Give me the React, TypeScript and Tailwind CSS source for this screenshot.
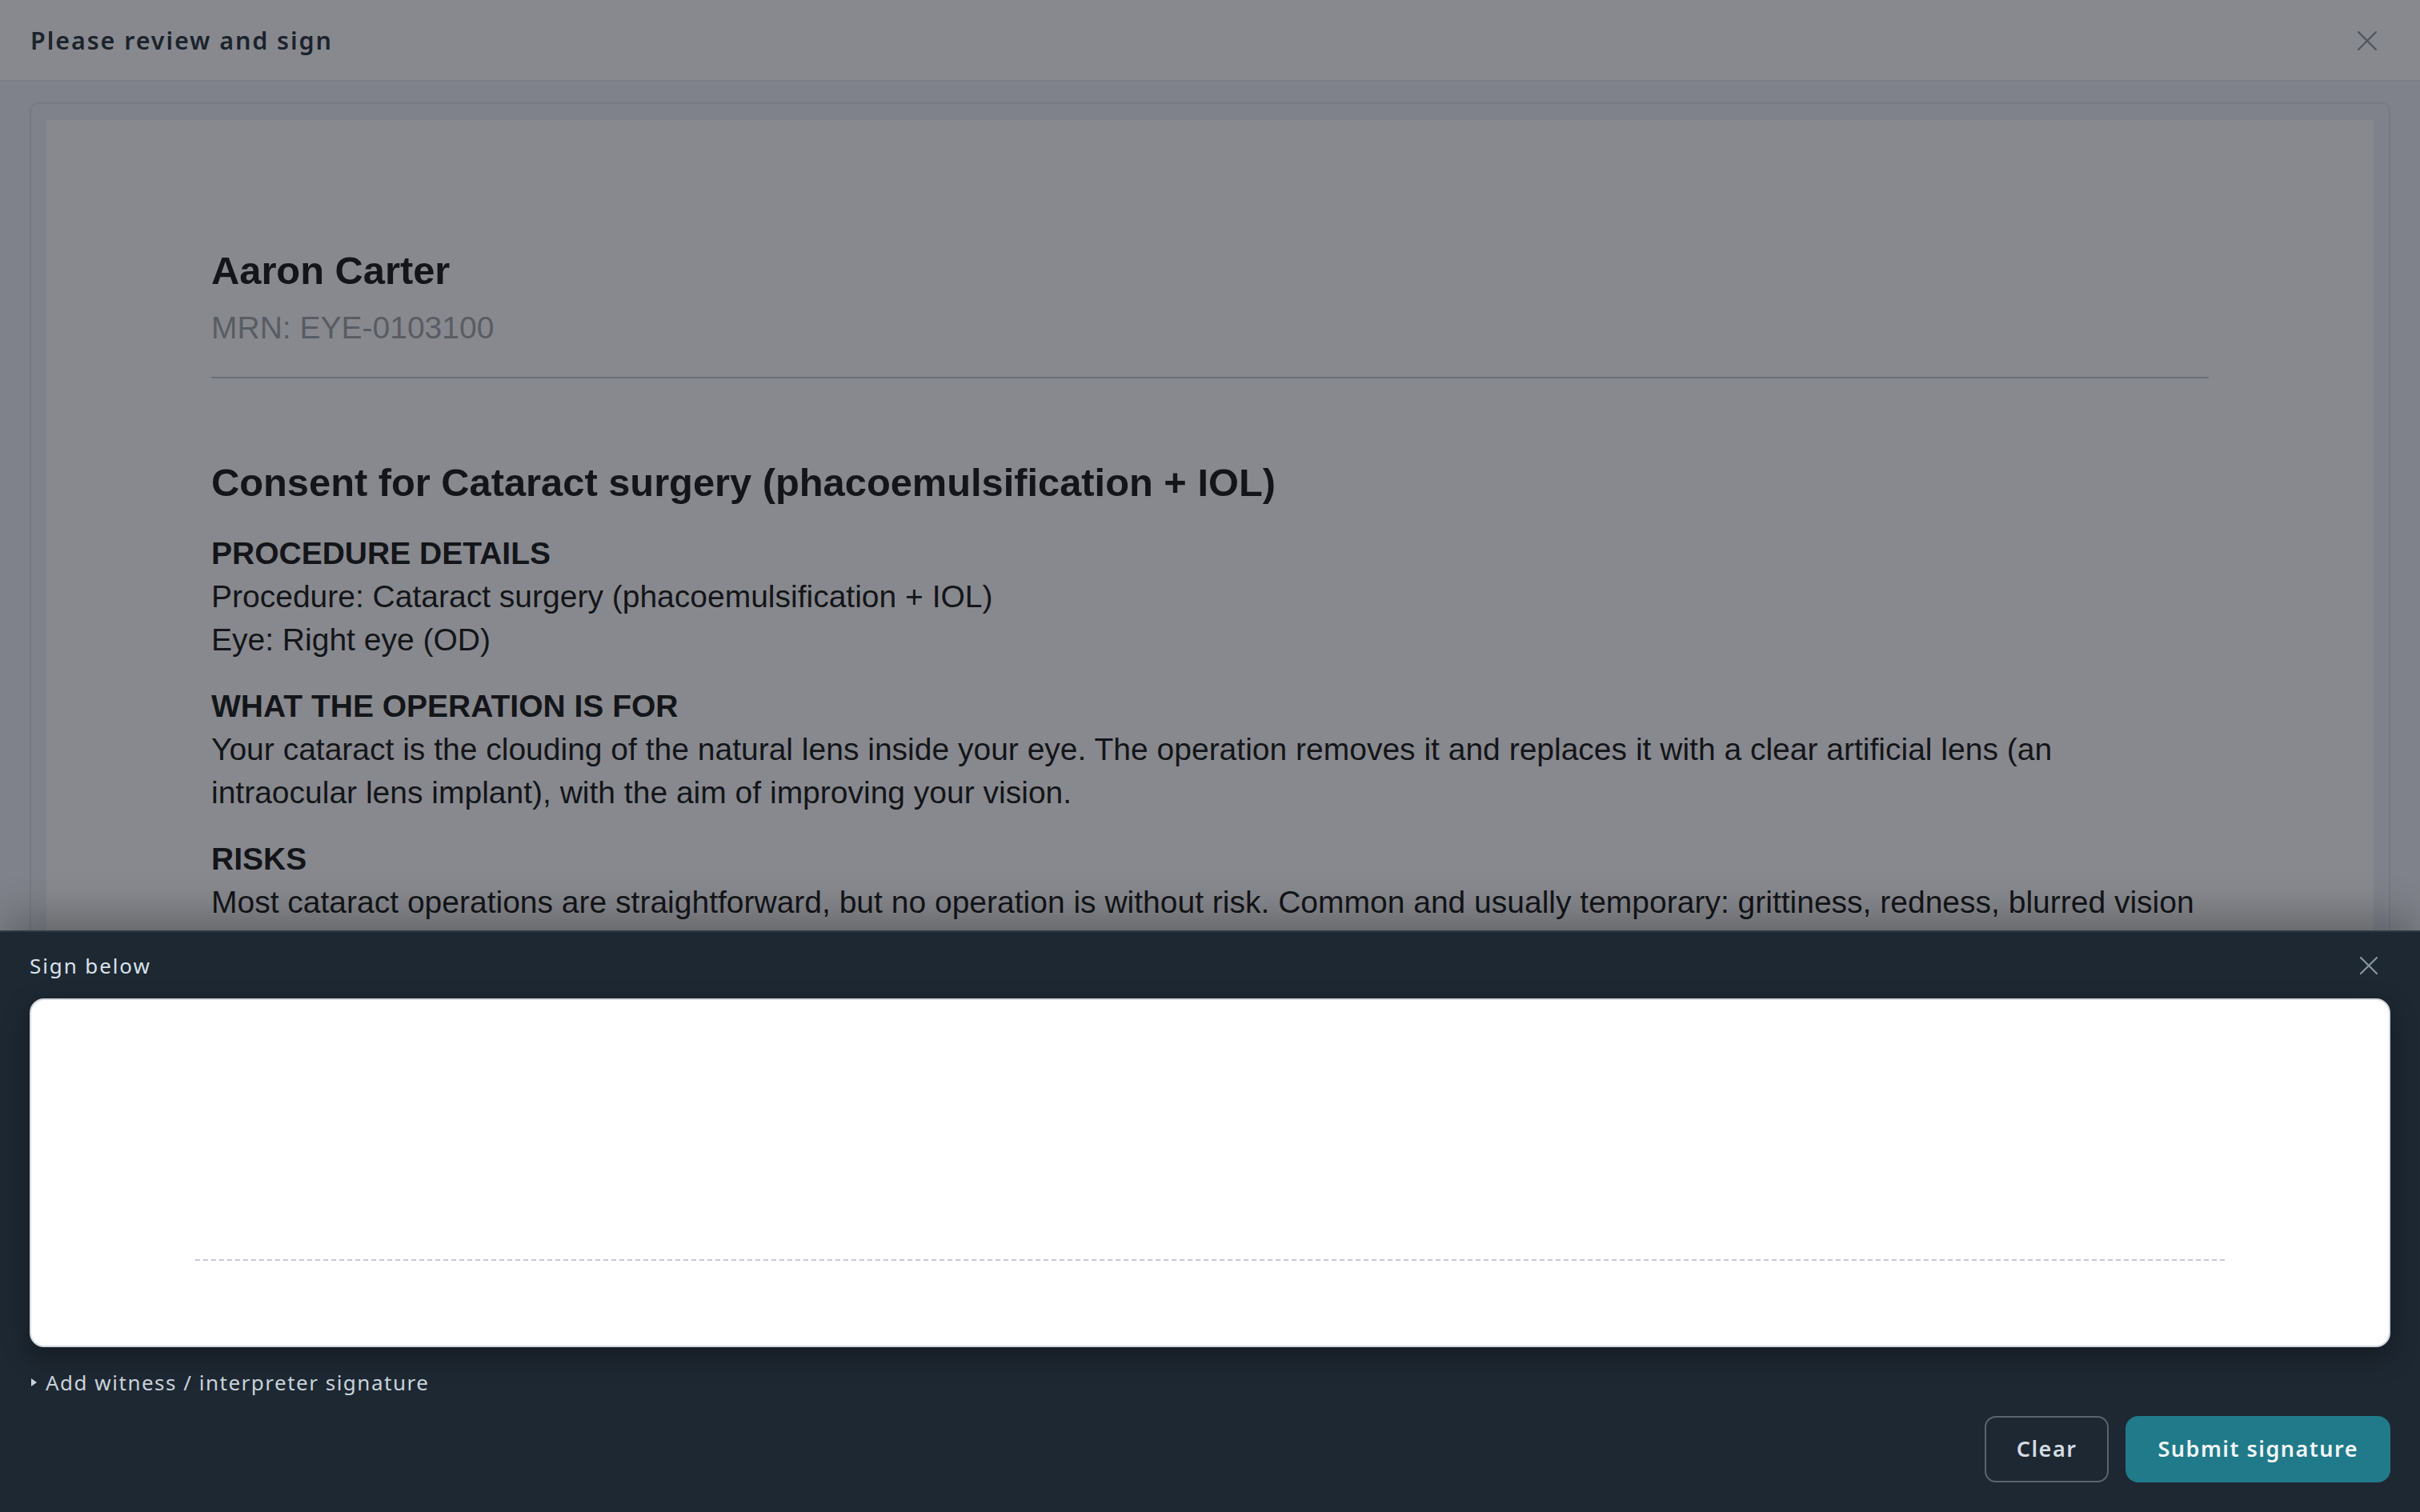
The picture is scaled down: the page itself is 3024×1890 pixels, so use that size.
import React from "react";

function XIcon({ size, color, stroke }: { size: number; color: string; stroke: number }) {
  return (
    <svg width={size} height={size} viewBox="0 0 24 24" fill="none" stroke={color} strokeWidth={stroke} strokeLinecap="round">
      <path d="M1 1L23 23M23 1L1 23" />
    </svg>
  );
}

export default function App() {
  return (
    <div className="relative h-[1890px] w-full overflow-hidden bg-[#7f828a] font-['Noto_Sans',sans-serif]">
      <header className="flex h-[102px] items-center justify-between border-b-2 border-[#7b7e85] bg-[#88898e] pl-[38px] pr-[54px] pt-[2px]">
        <h1 className="text-[30.5px] font-semibold tracking-[1.9px] text-[#1b232c]">Please review and sign</h1>
        <XIcon size={24} color="#4b5660" stroke={2.2} />
      </header>

      <main className="px-[37px] pt-[26px]">
        <div className="rounded-[10px] border-2 border-[#777a82] px-[19px] pt-[20px]">
          <article className="bg-[#88898e] px-[206px] pt-[155px] pb-[300px] font-['Liberation_Sans',Arial,sans-serif] text-[#131519]">
            <h2 className="text-[48.8px] font-bold leading-[67px]">Aaron Carter</h2>
            <p className="mt-[11px] text-[39px] leading-[54px] text-[#595c63]">MRN: EYE-0103100</p>
            <div className="mt-[34px] h-[2px] bg-[#6b7079]" />

            <h3 className="mt-[97px] text-[48.8px] font-bold leading-[67px]">
              Consent for Cataract surgery (phacoemulsification + IOL)
            </h3>

            <section className="mt-[28px] pr-[12px] text-[39px] leading-[54px]">
              <h4 className="font-bold">PROCEDURE DETAILS</h4>
              <p>Procedure: Cataract surgery (phacoemulsification + IOL)</p>
              <p>Eye: Right eye (OD)</p>
            </section>

            <section className="mt-[29px] pr-[12px] text-[39px] leading-[54px]">
              <h4 className="font-bold">WHAT THE OPERATION IS FOR</h4>
              <p>
                Your cataract is the clouding of the natural lens inside your eye. The operation removes it and replaces it with a clear artificial lens (an intraocular lens implant), with the aim of improving your vision.
              </p>
            </section>

            <section className="mt-[29px] pr-[12px] text-[39px] leading-[54px]">
              <h4 className="font-bold">RISKS</h4>
              <p>
                Most cataract operations are straightforward, but no operation is without risk. Common and usually temporary: grittiness, redness, blurred vision and raised pressure in the eye for the first few days. Less common: inflammation, swelling at the back of the eye, or a tear in the lens capsule that may need further surgery.
              </p>
            </section>
          </article>
        </div>
      </main>

      <div className="absolute inset-x-0 bottom-0 flex h-[727px] flex-col border-t-2 border-[#2e3a45] bg-[#1e2832] px-[37px] shadow-[0_-24px_48px_-8px_rgba(0,0,0,0.28)]">
        <div className="flex h-[83px] items-center justify-between">
          <span className="text-[26px] leading-[36px] tracking-[1.9px] text-[#d9e2ea]">Sign below</span>
          <span className="mr-[16px] flex">
            <XIcon size={22} color="#8796a2" stroke={2.4} />
          </span>
        </div>

        <div className="h-[436px] rounded-[18px] border-2 border-[#d3d8de] bg-white px-[205px] pt-[324px] shadow-[0_12px_32px_rgba(0,0,0,0.35)]">
          <div className="h-[2px] bg-[repeating-linear-gradient(90deg,#c9cad6_0_6px,transparent_6px_10px)]" />
        </div>

        <div className="mt-[26px] flex h-[36px] items-center">
          <span className="ml-[2px] h-0 w-0 border-y-[5px] border-l-[7px] border-y-transparent border-l-[#c9d2da]" />
          <span className="ml-[11px] text-[26px] leading-[36px] tracking-[1.5px] text-[#c9d2da]">
            Add witness / interpreter signature
          </span>
        </div>

        <div className="mt-[24px] flex justify-end gap-[21px]">
          <button className="h-[83px] rounded-[14px] border-2 border-[#5b646d] px-[38px] text-[27px] font-semibold tracking-[1.5px] text-[#d3dbe3]">
            Clear
          </button>
          <button className="h-[83px] rounded-[16px] bg-[#217a8a] px-[40px] text-[27px] font-semibold tracking-[1.5px] text-[#f1f6f8]">
            Submit signature
          </button>
        </div>
      </div>
    </div>
  );
}
